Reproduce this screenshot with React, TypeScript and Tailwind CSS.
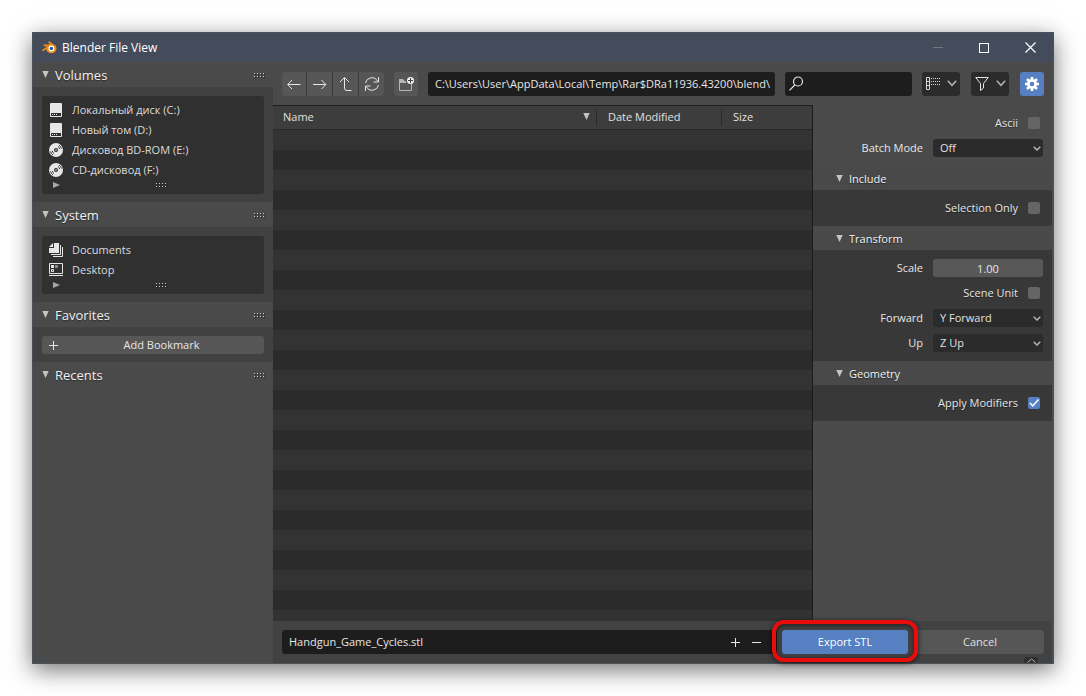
import type { ReactNode } from "react";

const fieldText = "text-[11px] text-[#e6e6e6]";

function Grip({ cols = 4 }: { cols?: number }) {
  return (
    <svg width={cols * 3} height="5" className="shrink-0" fill="#c8c8c8" aria-hidden="true">
      {Array.from({ length: cols }, (_, i) => (
        <g key={i}>
          <rect x={i * 3} y="0" width="1" height="1" />
          <rect x={i * 3} y="3" width="1" height="1" />
          <rect x={i * 3 + 1} y="1" width="1" height="1" fill="#222" />
          <rect x={i * 3 + 1} y="4" width="1" height="1" fill="#222" />
        </g>
      ))}
    </svg>
  );
}

function Triangle() {
  return (
    <svg width="7" height="9" viewBox="0 0 7 9" className="shrink-0" fill="#c4c4c4" aria-hidden="true">
      <path d="M.3 0h6.400L3.500 7z" />
    </svg>
  );
}

function Chevron() {
  return (
    <svg width="10" height="7" viewBox="0 0 10 7" fill="none" stroke="#b4b4b4" strokeWidth="1.500" aria-hidden="true">
      <path d="M.8.800L5 5.300 9.200.800" />
    </svg>
  );
}

function BlenderLogo() {
  return (
    <svg width="15" height="13" viewBox="0 0 15 13" aria-hidden="true">
      <path d="M7.2 1.2L13 5.6" stroke="#ea8a1c" strokeWidth="1.8" strokeLinecap="round" />
      <path d="M2.2 4.3H9M1 9.4l7.500-5.600" stroke="#ea8a1c" strokeWidth="1.8" strokeLinecap="round" />
      <ellipse cx="9.300" cy="7.600" rx="5.200" ry="4.700" fill="#ea8a1c" />
      <circle cx="9.400" cy="7.400" r="3" fill="#fff" />
      <circle cx="9.400" cy="7.400" r="1.700" fill="#265787" />
    </svg>
  );
}

function DiskIcon() {
  return (
    <svg width="14" height="14" viewBox="0 0 14 14" aria-hidden="true">
      <path d="M2 0h10a1 1 0 0 1 1 1v12a1 1 0 0 1-1 1H2a1 1 0 0 1-1-1V1a1 1 0 0 1 1-1z" fill="#e6e6e6" />
      <path d="M2 10h10v3H2z" fill="#2f2f2f" />
      <path d="M3 11h1v1H3zM5 11h1v1H5zM7 11h1v1H7z" fill="#e6e6e6" />
    </svg>
  );
}

function DiscIcon() {
  return (
    <svg width="14" height="14" viewBox="0 0 14 14" fill="none" aria-hidden="true">
      <circle cx="7" cy="7" r="7" fill="#e6e6e6" />
      <circle cx="7" cy="7" r="2" fill="#2f2f2f" />
      <circle cx="7" cy="7" r="0.8" fill="#e6e6e6" />
      <path d="M9 3.500A4 4 0 0 1 10.700 6M5 10.500A4 4 0 0 1 3.300 8M10.200 2.200A6 6 0 0 1 12.500 5.500M3.800 11.800A6 6 0 0 1 1.500 8.500" stroke="#2f2f2f" />
    </svg>
  );
}

function DocumentsIcon() {
  return (
    <svg width="14" height="14" viewBox="0 0 14 14" fill="none" aria-hidden="true">
      <path d="M5 0h5v10H0V5h5z" fill="#e6e6e6" />
      <path d="M0 4l4-4v4z" fill="#e6e6e6" />
      <path d="M11.500 2v9.500H2M13.500 4v9.500H4" stroke="#e6e6e6" />
    </svg>
  );
}

function DesktopIcon() {
  return (
    <svg width="14" height="14" viewBox="0 0 14 14" fill="none" aria-hidden="true">
      <path d="M.5 .5h13v10H.5zM0 12.500h14" stroke="#e6e6e6" />
      <path d="M2 2h3v3H2z" fill="#e6e6e6" />
      <path d="M6 2h3v3H6z" fill="#8a8a8a" />
      <path d="M2.500 6.500h2v2h-2z" stroke="#e6e6e6" />
    </svg>
  );
}

function SidePanel({ title, children }: { title: string; children?: ReactNode }) {
  return (
    <section>
      <h2 className="flex h-[25px] items-center gap-[6px] bg-[#4a4a4a] pt-[2px] pr-[7px] pl-[9px] text-[13px] text-[#f0f0f0] [text-shadow:0_1px_1px_rgba(0,0,0,0.4)]">
        <Triangle />
        <span className="flex-1">{title}</span>
        <Grip />
      </h2>
      {children && <div className="bg-[#414141] px-[9px] pt-[9px] pb-2">{children}</div>}
    </section>
  );
}

function PlaceList({ items }: { items: { name: string; icon: ReactNode }[] }) {
  return (
    <div className="rounded-[3px] bg-[#303030] py-1">
      <ul>
        {items.map((item) => (
          <li key={item.name}>
            <button type="button" className="flex h-5 w-full items-center gap-[9px] pl-[7px] text-[11px] text-[#dcdcdc]">
              {item.icon}
              {item.name}
            </button>
          </li>
        ))}
      </ul>
      <div className="flex h-[10px] items-center pr-24 pl-[11px]">
        <svg width="7" height="6" viewBox="0 0 7 6" fill="#a8a8a8" aria-hidden="true">
          <path d="M0 0l7 3-7 3z" />
        </svg>
        <span className="flex flex-1 justify-end">
          <Grip />
        </span>
      </div>
    </div>
  );
}

function OptionHeader({ title }: { title: string }) {
  return (
    <h3 className="flex h-6 items-center gap-[6px] bg-[#494949] pt-[2px] pl-[23px] text-[11px] text-[#f4f4f4] [text-shadow:0_1px_1px_rgba(0,0,0,0.5)]">
      <Triangle />
      {title}
    </h3>
  );
}

function CheckRow({ label, checked = false }: { label: string; checked?: boolean }) {
  return (
    <label className="flex h-5 items-center justify-end gap-[10px] pr-3 text-[11px] text-[#e6e6e6] [text-shadow:0_1px_1px_rgba(0,0,0,0.4)]">
      {label}
      <span className="relative size-3">
        <input type="checkbox" defaultChecked={checked} className="peer block size-3 appearance-none rounded-[2px] bg-[#656565] checked:bg-[#5680c2]" />
        <svg width="12" height="12" viewBox="0 0 12 12" className="pointer-events-none absolute inset-0 hidden peer-checked:block" fill="none" stroke="#fff" strokeWidth="1.500" aria-hidden="true">
          <path d="M2 6l2.700 3L10.500 2.500" />
        </svg>
      </span>
    </label>
  );
}

function SelectRow({ label, value }: { label: string; value: string }) {
  return (
    <label className="flex h-5 items-center justify-end gap-[10px] pr-[9px] text-[11px] text-[#e6e6e6]">
      {label}
      <span className="relative w-[110px]">
        <select defaultValue={value} className="block h-[18px] w-full appearance-none rounded-[3px] bg-[#2b2b2b] pl-[7px] leading-[18px] text-[#e0e0e0]">
          <option>{value}</option>
        </select>
        <svg width="8" height="5" viewBox="0 0 8 5" className="pointer-events-none absolute top-[7px] right-[2px]" fill="none" stroke="#b4b4b4" strokeWidth="1.500" aria-hidden="true">
          <path d="M.7.700L4 4 7.300.700" />
        </svg>
      </span>
    </label>
  );
}

function ToolButton({ label, children }: { label: string; children: ReactNode }) {
  return (
    <button type="button" aria-label={label} className="flex h-6 w-[25px] items-center justify-center bg-[#565656] first:w-6">
      {children}
    </button>
  );
}

function Toolbar() {
  return (
    <div className="flex h-[43px] shrink-0 items-center bg-[#4a4a4a] pr-2 pl-[9px]">
      <div className="flex shrink-0 gap-px overflow-hidden rounded-[3px] bg-[#3a3a3a]">
        <ToolButton label="Back">
          <svg width="14" height="12" viewBox="0 0 14 12" fill="none" stroke="#e6e6e6" aria-hidden="true">
            <path d="M.7 6.500H13.500M5 2L.7 6.500 5 11" />
          </svg>
        </ToolButton>
        <ToolButton label="Forward">
          <svg width="14" height="12" viewBox="0 0 14 12" fill="none" stroke="#e6e6e6" aria-hidden="true">
            <path d="M0 6.500h12.800M8.500 2L12.800 6.500 8.500 11" />
          </svg>
        </ToolButton>
        <ToolButton label="Parent directory">
          <svg width="14" height="16" viewBox="0 0 14 16" fill="none" stroke="#e6e6e6" aria-hidden="true">
            <path d="M1 6l4.500-4.500L10 6M5.500 2v10q0 2.500 2.500 2.500h4.500" />
          </svg>
        </ToolButton>
        <ToolButton label="Refresh">
          <svg width="16" height="16" viewBox="0 0 16 16" fill="none" stroke="#e6e6e6" aria-hidden="true">
            <path d="M1.500 7A6.500 6.500 0 0 1 13.500 5M14.500 1v5h-5M14.500 9A6.500 6.500 0 0 1 2.500 11M1.500 15v-5h5" />
          </svg>
        </ToolButton>
      </div>
      <button type="button" aria-label="New directory" className="ml-[10px] flex size-6 shrink-0 items-center justify-center rounded-[3px] bg-[#565656]">
        <svg width="16" height="16" viewBox="0 0 16 16" fill="none" aria-hidden="true">
          <path d="M1.500 4v10.500h12V8" stroke="#b4b4b4" />
          <path d="M1 3h4l1.500 2H8v2H1z" fill="#b4b4b4" />
          <circle cx="12.500" cy="4.500" r="3.500" fill="#f0f0f0" />
          <path d="M12.500 2v5M10 4.500h5" stroke="#444" />
        </svg>
      </button>
      <input aria-label="Directory" defaultValue="C:\Users\User\AppData\Local\Temp\Rar$DRa11936.43200\blend\" className={`ml-[10px] h-6 min-w-0 flex-1 rounded-[3px] bg-[#1d1d1d] pl-[7px] ${fieldText}`} />
      <div className="ml-[10px] flex h-6 w-[127px] shrink-0 items-center rounded-[3px] bg-[#1d1d1d] pl-1">
        <svg width="15" height="15" viewBox="0 0 15 15" fill="none" stroke="#e6e6e6" strokeWidth="1.200" className="shrink-0" aria-hidden="true">
          <circle cx="9" cy="5.500" r="4.500" />
          <path d="M5.800 9L.5 14.300" />
        </svg>
        <input aria-label="Search" className={`min-w-0 flex-1 px-1 outline-none ${fieldText}`} />
      </div>
      <button type="button" aria-label="Display mode" className="ml-[10px] flex h-6 w-[38px] shrink-0 items-center justify-between rounded-[3px] bg-[#2b2b2b] pr-[3px] pl-1">
        <svg width="14" height="14" viewBox="0 0 14 14" fill="none" stroke="#d8d8d8" aria-hidden="true">
          <path d="M.5.500h3v12h-3zM.5 4.500h3M.5 8.500h3" />
          <path d="M5 1.500h9M5 4.500h9M5 7.500h9" strokeDasharray="1 1" />
        </svg>
        <Chevron />
      </button>
      <button type="button" aria-label="Filter" className="ml-[11px] flex h-6 w-[38px] shrink-0 items-center justify-between rounded-[3px] bg-[#2b2b2b] pr-[3px] pl-1">
        <svg width="14" height="14" viewBox="0 0 14 14" fill="none" stroke="#e6e6e6" aria-hidden="true">
          <path d="M.8.500h12.400L8.500 6.500v4.500l-3 2.500v-7z" />
        </svg>
        <Chevron />
      </button>
      <button type="button" aria-label="Toggle options" className="ml-[11px] flex size-6 shrink-0 items-center justify-center rounded-[3px] bg-[#5680c2]">
        <svg width="14" height="14" viewBox="0 0 14 14" fill="none" stroke="#fff" aria-hidden="true">
          <circle cx="7" cy="7" r="3.700" strokeWidth="2.800" />
          <path d="M7 0v3M7 11v3M0 7h3M11 7h3M2 2l2.200 2.200M9.800 9.800L12 12M2 12l2.200-2.200M9.800 4.200L12 2" strokeWidth="2.600" />
        </svg>
      </button>
    </div>
  );
}

const volumes = [
  { name: "Локальный диск (C:)", icon: <DiskIcon /> },
  { name: "Новый том (D:)", icon: <DiskIcon /> },
  { name: "Дисковод BD-ROM (E:)", icon: <DiscIcon /> },
  { name: "CD-дисковод (F:)", icon: <DiscIcon /> },
];

const system = [
  { name: "Documents", icon: <DocumentsIcon /> },
  { name: "Desktop", icon: <DesktopIcon /> },
];

export default function App() {
  return (
    <div className="flex h-screen flex-col bg-white p-8 font-['Open_Sans',sans-serif]">
      <div className="flex min-h-0 flex-1 flex-col border border-[#4b5158] bg-[#4a4a4a] shadow-[0_6px_22px_rgba(0,0,0,0.55)]">
        <header className="flex h-[29px] shrink-0 items-center bg-[#444b5b] pl-[9px] text-white">
          <BlenderLogo />
          <h1 className="ml-[5px] flex-1 text-xs">Blender File View</h1>
          <button type="button" aria-label="Minimize" className="flex h-full w-[46px] items-center justify-center">
            <span className="h-px w-[10px] bg-[#6d7482]" />
          </button>
          <button type="button" aria-label="Maximize" className="flex h-full w-[46px] items-center justify-center">
            <span className="size-[10px] border border-white" />
          </button>
          <button type="button" aria-label="Close" className="flex h-full w-[46px] items-center justify-center">
            <svg width="11" height="11" viewBox="0 0 11 11" stroke="#fff" strokeWidth="1.200" aria-hidden="true">
              <path d="M.5.500l10 10M10.500.500l-10 10" />
            </svg>
          </button>
        </header>

        <div className="flex min-h-0 flex-1 border-r border-[#4b5158]">
          <aside className="w-60 shrink-0">
            <SidePanel title="Volumes">
              <PlaceList items={volumes} />
            </SidePanel>
            <SidePanel title="System">
              <PlaceList items={system} />
            </SidePanel>
            <SidePanel title="Favorites">
              <button type="button" className="flex h-[18px] w-full items-center rounded-[3px] bg-[#565656] px-[7px] text-[11px] text-[#e6e6e6]">
                <svg width="9" height="9" viewBox="0 0 9 9" stroke="#e6e6e6" aria-hidden="true">
                  <path d="M0 4.500h9M4.500 0v9" />
                </svg>
                <span className="flex-1 pl-2">Add Bookmark</span>
              </button>
            </SidePanel>
            <SidePanel title="Recents" />
          </aside>

          <main className="flex min-w-0 flex-1 flex-col">
            <Toolbar />
            <div className="flex min-h-0 flex-1">
              <div className="min-w-0 flex-1 border-t border-r border-[#1c1c1c] bg-[repeating-linear-gradient(#333_0px,#333_20px,#2b2b2b_20px,#2b2b2b_40px)] bg-[position:0_24px]">
                <table className="w-full table-fixed border-collapse bg-[#3d3d3d] text-left text-[11px] text-[#e0e0e0]">
                  <thead>
                    <tr className="h-[23px] border-b border-[#282828]">
                      <th className="p-0 pl-[10px] font-normal">
                        <span className="flex items-center justify-between border-r border-[#2a2a2a] pr-[6px]">
                          Name
                          <Triangle />
                        </span>
                      </th>
                      <th className="w-[125px] p-0 font-normal">
                        <span className="block border-r border-[#2a2a2a] pl-[11px]">Date Modified</span>
                      </th>
                      <th className="w-[90px] p-0 pl-[11px] font-normal">Size</th>
                    </tr>
                  </thead>
                </table>
              </div>

              <form className="w-[239px] shrink-0">
                <div className="flex flex-col gap-[5px] py-2">
                  <CheckRow label="Ascii" />
                  <SelectRow label="Batch Mode" value="Off" />
                </div>
                <OptionHeader title="Include" />
                <div className="bg-[#383838] py-2">
                  <CheckRow label="Selection Only" />
                </div>
                <OptionHeader title="Transform" />
                <div className="flex flex-col gap-[5px] bg-[#383838] py-2">
                  <label className="flex h-5 items-center justify-end gap-[10px] pr-[9px] text-[11px] text-[#e6e6e6]">
                    Scale
                    <input defaultValue="1.00" className="h-[18px] w-[110px] rounded-[3px] bg-[#585858] text-center" />
                  </label>
                  <CheckRow label="Scene Unit" />
                  <SelectRow label="Forward" value="Y Forward" />
                  <SelectRow label="Up" value="Z Up" />
                </div>
                <OptionHeader title="Geometry" />
                <div className="bg-[#383838] py-2">
                  <CheckRow label="Apply Modifiers" checked />
                </div>
              </form>
            </div>

            <footer className="relative flex h-[42px] shrink-0 items-start bg-[#424242] pt-[9px] pr-2 pl-[9px]">
              <div className="flex h-6 min-w-0 flex-1 items-center rounded-[3px] bg-[#1d1d1d]">
                <input aria-label="File name" defaultValue="Handgun_Game_Cycles.stl" className={`min-w-0 flex-1 px-[7px] ${fieldText}`} />
                <button type="button" aria-label="Increment file number" className="flex w-[21px] justify-center">
                  <svg width="9" height="9" viewBox="0 0 9 9" stroke="#e6e6e6" aria-hidden="true">
                    <path d="M0 4.500h9M4.500 0v9" />
                  </svg>
                </button>
                <button type="button" aria-label="Decrement file number" className="mr-[10px] flex w-[21px] justify-center">
                  <svg width="9" height="9" viewBox="0 0 9 9" stroke="#e6e6e6" aria-hidden="true">
                    <path d="M0 4.500h9" />
                  </svg>
                </button>
              </div>
              <div className="relative ml-[5px] shrink-0">
                <button type="button" className="block h-6 w-[126px] rounded-[3px] bg-[#5680c2] text-[11px] text-white">Export STL</button>
                <span className="pointer-events-none absolute -inset-x-[10px] -top-[10px] -bottom-2 rounded-xl border-4 border-[#ea0b0b] shadow-[0_1px_5px_rgba(0,0,0,0.7),inset_0_1px_5px_rgba(0,0,0,0.6)]" />
              </div>
              <button type="button" className="ml-2 h-6 w-[128px] shrink-0 rounded-[3px] bg-[#565656] text-[11px] text-[#e0e0e0]">Cancel</button>
              <span className="absolute right-[14px] bottom-0 flex h-[6px] w-[14px] items-center justify-center rounded-t-[3px] bg-[#2f2f2f]">
                <svg width="9" height="5" viewBox="0 0 9 5" fill="none" stroke="#b4b4b4" aria-hidden="true">
                  <path d="M.5 4.500l4-3.500 4 3.500" />
                </svg>
              </span>
            </footer>
          </main>
        </div>
      </div>
    </div>
  );
}
